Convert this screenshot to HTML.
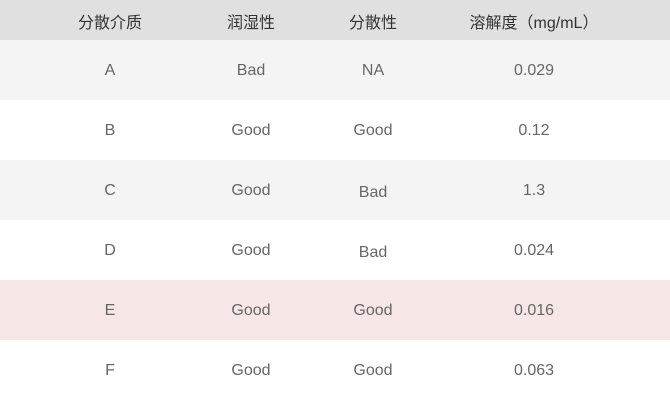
<!DOCTYPE html>
<html><head><meta charset="utf-8"><style>
body{margin:0;width:670px;height:400px;background:#fff;font-family:"Liberation Sans","Noto Sans CJK SC",sans-serif;overflow:hidden}
.r{position:relative;height:60px;font-size:16px;color:#666}
.r span,.h span{position:absolute;top:calc(50% + 1px);transform:translate(-50%,-50%);white-space:nowrap}
.h{position:relative;height:40px;background:#e0e0e0;color:#333;font-size:16px}
.g{background:#f4f4f4}.p{background:#f7e6e6}
.c1{left:110px}.c2{left:251px}.c3{left:373px}.c4{left:534px}
</style></head><body>
<div class="h"><span class="c1">分散介质</span><span class="c2">润湿性</span><span class="c3">分散性</span><span class="c4">溶解度（mg/mL）</span></div>
<div class="r g"><span class="c1">A</span><span class="c2">Bad</span><span class="c3">NA</span><span class="c4">0.029</span></div>
<div class="r"><span class="c1">B</span><span class="c2">Good</span><span class="c3">Good</span><span class="c4">0.12</span></div>
<div class="r g"><span class="c1">C</span><span class="c2">Good</span><span class="c3" style="margin-top:2px">Bad</span><span class="c4">1.3</span></div>
<div class="r"><span class="c1">D</span><span class="c2">Good</span><span class="c3" style="margin-top:2px">Bad</span><span class="c4">0.024</span></div>
<div class="r p"><span class="c1">E</span><span class="c2">Good</span><span class="c3">Good</span><span class="c4">0.016</span></div>
<div class="r"><span class="c1">F</span><span class="c2">Good</span><span class="c3">Good</span><span class="c4">0.063</span></div>
</body></html>
